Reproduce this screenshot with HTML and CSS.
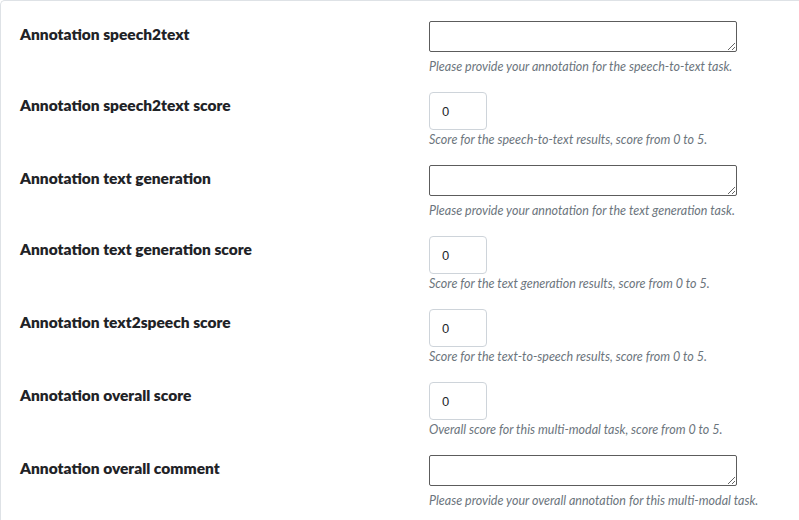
FILE: index.html
```html
<!DOCTYPE html>
<html lang="en">
<head>
<meta charset="utf-8">
<title>Annotation</title>
<link rel="stylesheet" href="styles.css">
</head>
<body>
<div class="card">
  <div class="row">
    <label class="label">Annotation speech2text</label>
    <div class="field">
      <textarea class="area"></textarea>
      <div class="help help-area">Please provide your annotation for the speech-to-text task.</div>
    </div>
  </div>
  <div class="row">
    <label class="label">Annotation speech2text score</label>
    <div class="field">
      <input class="num" type="number" value="0">
      <div class="help help-num">Score for the speech-to-text results, score from 0 to 5.</div>
    </div>
  </div>
  <div class="row">
    <label class="label">Annotation text generation</label>
    <div class="field">
      <textarea class="area"></textarea>
      <div class="help help-area">Please provide your annotation for the text generation task.</div>
    </div>
  </div>
  <div class="row">
    <label class="label">Annotation text generation score</label>
    <div class="field">
      <input class="num" type="number" value="0">
      <div class="help help-num">Score for the text generation results, score from 0 to 5.</div>
    </div>
  </div>
  <div class="row">
    <label class="label">Annotation text2speech score</label>
    <div class="field">
      <input class="num" type="number" value="0">
      <div class="help help-num">Score for the text-to-speech results, score from 0 to 5.</div>
    </div>
  </div>
  <div class="row">
    <label class="label">Annotation overall score</label>
    <div class="field">
      <input class="num" type="number" value="0">
      <div class="help help-num">Overall score for this multi-modal task, score from 0 to 5.</div>
    </div>
  </div>
  <div class="row">
    <label class="label">Annotation overall comment</label>
    <div class="field">
      <textarea class="area"></textarea>
      <div class="help help-area">Please provide your overall annotation for this multi-modal task.</div>
    </div>
  </div>
</div>
</body>
</html>
```
FILE: styles.css
```css
html, body {
  margin: 0;
  padding: 0;
  background: #ffffff;
  overflow: hidden;
}

body {
  font-family: Lato, "Open Sans", sans-serif;
  color: #212529;
}

.card {
  width: 100%;
  box-sizing: border-box;
  border: 1px solid #dee2e6;
  border-right: none;
  border-bottom: none;
  border-radius: 5px 0 0 0;
  padding: 20px 0 0 19px;
  min-height: 520px;
}

.row {
  display: grid;
  grid-template-columns: 409px 1fr;
  padding-bottom: 16px;
}

.label {
  font-weight: 800;
  font-size: 15.5px;
  line-height: 18px;
  padding-top: 4px;
  color: #1f2327;
}

.field {
  display: flex;
  flex-direction: column;
  align-items: flex-start;
}

.area {
  display: block;
  box-sizing: border-box;
  width: 308px;
  height: 31px;
  margin: 0;
  border: 1px solid #5c5c5c;
  border-radius: 2px;
  padding: 2px;
  resize: vertical;
  font-family: "Liberation Mono", monospace;
}

.num {
  display: block;
  box-sizing: border-box;
  width: 58px;
  height: 38px;
  margin: 0;
  border: 1px solid #ced4da;
  border-radius: 4px;
  padding: 0 12px;
  font-family: "Liberation Sans", Arial, sans-serif;
  font-size: 13px;
  color: #212529;
  -moz-appearance: textfield;
}

.num::-webkit-outer-spin-button,
.num::-webkit-inner-spin-button {
  -webkit-appearance: none;
  margin: 0;
}

.help {
  font-style: italic;
  font-size: 12.5px;
  line-height: 18px;
  color: #6c757d;
}

.help-area {
  margin-top: 6px;
}

.help-num {
  margin-top: 1px;
}
```
